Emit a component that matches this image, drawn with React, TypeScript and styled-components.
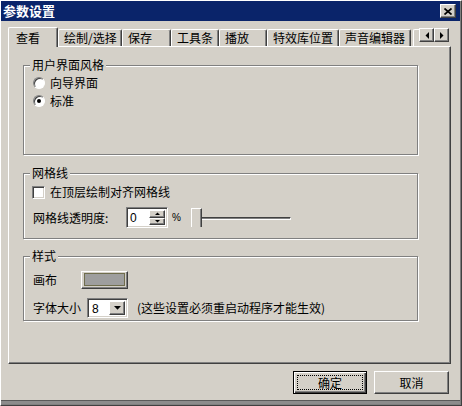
import React from "react";
import styled, { createGlobalStyle, css } from "styled-components";

const Global = createGlobalStyle`
  html, body { margin: 0; padding: 0; background: #d4d0c8; }
  body {
    font-family: "Noto Sans CJK SC", "Noto Sans", sans-serif;
    font-size: 12px;
    color: #000;
  }
  * { box-sizing: border-box; }
`;

const sunken = css`
  border: 1px solid;
  border-color: #808080 #fff #fff #808080;
  box-shadow: inset 1px 1px 0 #404040, inset -1px -1px 0 #d4d0c8;
`;

const raised = css`
  border: 1px solid;
  border-color: #fff #404040 #404040 #fff;
  box-shadow: inset -1px -1px 0 #808080;
  background: #d4d0c8;
`;

const Window = styled.div`
  width: 462px;
  height: 406px;
  background: #d4d0c8;
  border: 1px solid;
  border-color: #fff #404040 #404040 #fff;
  box-shadow: inset -1px -1px 0 #808080, inset 0 -4px 0 #8c8c8c,
    inset 0 -5px 0 #5a5a5a;
  display: flex;
  flex-direction: column;
`;

const TitleBar = styled.div`
  height: 20px;
  margin-right: 1px;
  background: #0a246a;
  display: flex;
  align-items: center;
  justify-content: space-between;
  padding: 0 4px 0 2px;
`;

const TitleText = styled.span`
  color: #fff;
  font-weight: bold;
  font-size: 13px;
  line-height: 16px;
`;

const CloseButton = styled.div`
  ${raised};
  width: 16px;
  height: 14px;
  display: flex;
  align-items: center;
  justify-content: center;
`;

const Content = styled.div`
  flex: 1;
  display: flex;
  flex-direction: column;
  padding: 6px 10px 0 7px;
`;

const TabStrip = styled.div`
  height: 19px;
  display: flex;
  align-items: flex-end;
  position: relative;
  z-index: 1;
`;

const Tab = styled.div<{ $w: number; $active?: boolean }>`
  width: ${(p) => p.$w}px;
  height: ${(p) => (p.$active ? 20 : 17)}px;
  margin-bottom: ${(p) => (p.$active ? -1 : 0)}px;
  background: #d4d0c8;
  border-left: 1px solid #fff;
  border-top: 1px solid #fff;
  border-right: 1px solid #404040;
  border-radius: 2px 2px 0 0;
  box-shadow: inset -1px 0 0 #808080;
  padding-left: ${(p) => (p.$active ? 7 : 5)}px;
  display: flex;
  align-items: center;
  white-space: nowrap;
  overflow: hidden;
  line-height: 14px;
`;

const PartialTab = styled.div`
  width: 8px;
  height: 17px;
  padding-left: 2px;
`;

const PartialEdge = styled.div`
  height: 100%;
  border-left: 1px solid #fff;
  border-top: 1px solid #fff;
  border-top-left-radius: 2px;
`;

const ScrollPair = styled.div`
  align-self: flex-start;
  margin-top: 1px;
  display: flex;
`;

const ScrollButton = styled.div`
  ${raised};
  width: 15px;
  height: 14px;
  display: flex;
  align-items: center;
  justify-content: center;
`;

const Panel = styled.div`
  height: 318px;
  border: 1px solid;
  border-color: #fff #404040 #404040 #fff;
  box-shadow: inset -1px -1px 0 #808080;
  padding: 18px 0 0 14px;
  display: flex;
  flex-direction: column;
`;

const Group = styled.div<{ $h: number; $mb: number }>`
  width: 395px;
  height: ${(p) => p.$h}px;
  margin-bottom: ${(p) => p.$mb}px;
  border: 1px solid #808080;
  box-shadow: inset 1px 1px 0 #fff, 1px 1px 0 #fff;
  display: flex;
  flex-direction: column;
`;

const GroupTitle = styled.div`
  margin: -8px 0 0 6px;
  padding: 0 2px;
  align-self: flex-start;
  background: #d4d0c8;
  line-height: 14px;
  height: 14px;
`;

const GroupBody = styled.div<{ $top: number; $gap: number }>`
  padding: ${(p) => p.$top}px 0 0 9px;
  display: flex;
  flex-direction: column;
  gap: ${(p) => p.$gap}px;
`;

const Row = styled.div<{ $h: number }>`
  height: ${(p) => p.$h}px;
  display: flex;
  align-items: center;
  line-height: 14px;
  white-space: nowrap;
`;

const Radio = styled.div<{ $checked?: boolean }>`
  width: 12px;
  height: 12px;
  border-radius: 50%;
  border: 1px solid;
  border-color: #808080 #fff #fff #808080;
  box-shadow: inset 1px 1px 0 #404040;
  background: #fff;
  margin-right: 5px;
  display: flex;
  align-items: center;
  justify-content: center;
  &::after {
    content: "";
    width: 4px;
    height: 4px;
    border-radius: 50%;
    background: ${(p) => (p.$checked ? "#000" : "transparent")};
  }
`;

const Checkbox = styled.div`
  ${sunken};
  width: 13px;
  height: 13px;
  background: #fff;
  margin: 0 5px 0 -1px;
`;

const Label = styled.span<{ $w: number }>`
  width: ${(p) => p.$w}px;
  flex: none;
`;

const Spinner = styled.div`
  ${sunken};
  width: 42px;
  height: 21px;
  background: #fff;
  display: flex;
  padding: 2px;
`;

const EditText = styled.span`
  flex: 1;
  padding-left: 1px;
  line-height: 17px;
  font-family: "Liberation Sans", Arial, sans-serif;
  font-size: 12px;
`;

const SpinColumn = styled.div`
  width: 16px;
  display: flex;
  flex-direction: column;
`;

const SpinButton = styled.div`
  ${raised};
  flex: 1;
  display: flex;
  align-items: center;
  justify-content: center;
`;

const Percent = styled.span`
  margin-left: 4px;
  font-family: "Liberation Sans", Arial, sans-serif;
  font-size: 10px;
`;

const Slider = styled.div`
  margin-left: 10px;
  display: flex;
  align-items: center;
  height: 19px;
`;

const Thumb = styled.div`
  width: 11px;
  height: 19px;
  border-left: 1px solid #fff;
  border-top: 1px solid #fff;
  border-right: 1px solid #404040;
  box-shadow: inset -1px 0 0 #808080;
`;

const Track = styled.div`
  width: 89px;
  height: 3px;
  margin-top: 1px;
  background: #404040;
  border-top: 1px solid #404040;
  border-bottom: 1px solid #fff;
  border-right: 1px solid #fff;
  box-shadow: inset 0 -1px 0 #808080;
`;

const ColorButton = styled.div`
  ${raised};
  width: 47px;
  height: 18px;
  padding: 1px 2px 2px 2px;
  display: flex;
`;

const Swatch = styled.div`
  flex: 1;
  background: #9e9e9e;
  border: 1px solid #6f6d4d;
`;

const Combo = styled.div`
  ${sunken};
  width: 41px;
  height: 20px;
  background: #fff;
  padding: 2px;
  display: flex;
`;

const ComboText = styled.span`
  flex: 1;
  padding-left: 2px;
  line-height: 16px;
  font-family: "Liberation Sans", Arial, sans-serif;
  font-size: 12px;
`;

const ComboButton = styled.div`
  ${raised};
  width: 16px;
  display: flex;
  align-items: center;
  justify-content: center;
`;

const Hint = styled.span`
  margin-left: 9px;
`;

const ButtonRow = styled.div`
  margin-top: 7px;
  padding-right: 2px;
  display: flex;
  justify-content: flex-end;
  gap: 7px;
`;

const PushButton = styled.div<{ $w: number; $default?: boolean }>`
  width: ${(p) => p.$w}px;
  height: 23px;
  display: flex;
  align-items: center;
  justify-content: center;
  line-height: 14px;
  background: #d4d0c8;
  ${(p) =>
    p.$default
      ? css`
          border: 1px solid #000;
          box-shadow: inset 1px 1px 0 #fff, inset -1px -1px 0 #404040,
            inset -2px -2px 0 #808080;
        `
      : css`
          border: 1px solid;
          border-color: #fff #404040 #404040 #fff;
          box-shadow: inset -1px -1px 0 #808080;
        `}
`;

const FocusRect = styled.div`
  width: calc(100% - 6px);
  height: calc(100% - 6px);
  border: 1px dotted #000;
  display: flex;
  align-items: center;
  justify-content: center;
`;

const Tri = ({ dir }: { dir: "up" | "down" | "left" | "right" }) => {
  const pts: Record<string, [string, number, number]> = {
    up: ["0,3 5,3 2.5,0.5", 5, 3],
    down: ["0,0 5,0 2.5,2.5", 5, 3],
    left: ["4,0 4,7 0.5,3.5", 4, 7],
    right: ["0,0 0,7 3.5,3.5", 4, 7],
  };
  const [p, w, h] = pts[dir];
  return (
    <svg width={w} height={h} viewBox={`0 0 ${w} ${h}`}>
      <polygon points={p} fill="#000" />
    </svg>
  );
};

const ComboArrow = () => (
  <svg width="7" height="4" viewBox="0 0 7 4">
    <polygon points="0,0 7,0 3.5,3.7" fill="#000" />
  </svg>
);

const CloseGlyph = () => (
  <svg width="8" height="7" viewBox="0 0 8 7">
    <path d="M0.5 0.5 L7.5 6.5 M7.5 0.5 L0.5 6.5" stroke="#000" strokeWidth="1.7" />
  </svg>
);

const tabs: { label: string; w: number; active?: boolean }[] = [
  { label: "查看", w: 50, active: true },
  { label: "绘制/选择", w: 64 },
  { label: "保存", w: 49 },
  { label: "工具条", w: 48 },
  { label: "播放", w: 48 },
  { label: "特效库位置", w: 72 },
  { label: "声音编辑器", w: 72 },
];

export default function App() {
  return (
    <>
      <Global />
      <Window>
        <TitleBar>
          <TitleText>参数设置</TitleText>
          <CloseButton>
            <CloseGlyph />
          </CloseButton>
        </TitleBar>
        <Content>
          <TabStrip>
            {tabs.map((t) => (
              <Tab key={t.label} $w={t.w} $active={t.active}>
                {t.label}
              </Tab>
            ))}
            <PartialTab>
              <PartialEdge />
            </PartialTab>
            <ScrollPair>
              <ScrollButton>
                <Tri dir="left" />
              </ScrollButton>
              <ScrollButton>
                <Tri dir="right" />
              </ScrollButton>
            </ScrollPair>
          </TabStrip>
          <Panel>
            <Group $h={90} $mb={18}>
              <GroupTitle>用户界面风格</GroupTitle>
              <GroupBody $top={2} $gap={0}>
                <Row $h={18}>
                  <Radio />
                  向导界面
                </Row>
                <Row $h={18}>
                  <Radio $checked />
                  标准
                </Row>
              </GroupBody>
            </Group>
            <Group $h={66} $mb={17}>
              <GroupTitle>网格线</GroupTitle>
              <GroupBody $top={3} $gap={6}>
                <Row $h={18}>
                  <Checkbox />
                  在顶层绘制对齐网格线
                </Row>
                <Row $h={21}>
                  <Label $w={93}>网格线透明度:</Label>
                  <Spinner>
                    <EditText>0</EditText>
                    <SpinColumn>
                      <SpinButton>
                        <Tri dir="up" />
                      </SpinButton>
                      <SpinButton>
                        <Tri dir="down" />
                      </SpinButton>
                    </SpinColumn>
                  </Spinner>
                  <Percent>%</Percent>
                  <Slider>
                    <Thumb />
                    <Track />
                  </Slider>
                </Row>
              </GroupBody>
            </Group>
            <Group $h={65} $mb={0}>
              <GroupTitle>样式</GroupTitle>
              <GroupBody $top={8} $gap={9}>
                <Row $h={18}>
                  <Label $w={48}>画布</Label>
                  <ColorButton>
                    <Swatch />
                  </ColorButton>
                </Row>
                <Row $h={20}>
                  <Label $w={54}>字体大小</Label>
                  <Combo>
                    <ComboText>8</ComboText>
                    <ComboButton>
                      <ComboArrow />
                    </ComboButton>
                  </Combo>
                  <Hint>(这些设置必须重启动程序才能生效)</Hint>
                </Row>
              </GroupBody>
            </Group>
          </Panel>
          <ButtonRow>
            <PushButton $w={74} $default>
              <FocusRect>确定</FocusRect>
            </PushButton>
            <PushButton $w={75}>取消</PushButton>
          </ButtonRow>
        </Content>
      </Window>
    </>
  );
}
